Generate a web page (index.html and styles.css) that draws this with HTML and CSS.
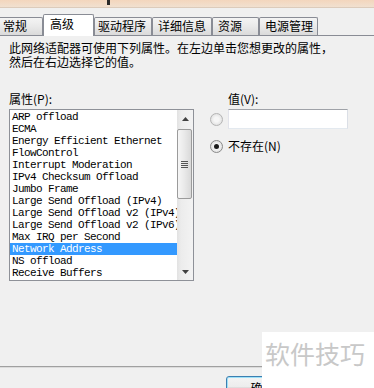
FILE: index.html
```html
<!DOCTYPE html>
<html lang="zh-CN">
<head>
<meta charset="utf-8">
<title>高级</title>
<link rel="stylesheet" href="styles.css">
</head>
<body>
<div class="titlebar"><span class="mark"></span></div>
<div class="tabs">
  <div class="tab t1">常规</div>
  <div class="tab t2 active">高级</div>
  <div class="tab t3">驱动程序</div>
  <div class="tab t4">详细信息</div>
  <div class="tab t5">资源</div>
  <div class="tab t6">电源管理</div>
</div>
<div class="panel">
  <div class="desc">
    <div class="line">此网络适配器可使用下列属性。在左边单击您想更改的属性，</div>
    <div class="line">然后在右边选择它的值。</div>
  </div>
  <div class="grid">
    <div class="label">属性(P):</div>
    <div class="label value-label">值(V):</div>
    <div class="listbox">
      <ul class="items">
        <li>ARP offload</li>
        <li>ECMA</li>
        <li>Energy Efficient Ethernet</li>
        <li>FlowControl</li>
        <li>Interrupt Moderation</li>
        <li>IPv4 Checksum Offload</li>
        <li>Jumbo Frame</li>
        <li>Large Send Offload (IPv4)</li>
        <li>Large Send Offload v2 (IPv4)</li>
        <li>Large Send Offload v2 (IPv6)</li>
        <li>Max IRQ per Second</li>
        <li class="selected">Network Address</li>
        <li>NS offload</li>
        <li>Receive Buffers</li>
      </ul>
      <div class="scrollbar">
        <div class="sb-btn"><svg width="7" height="4" viewBox="0 0 7 4"><path d="M3.5 0 L7 4 L0 4 Z" fill="#404040"/></svg></div>
        <div class="sb-track">
          <div class="thumb">
            <svg width="7" height="7" viewBox="0 0 7 7"><path d="M0 0.5H7M0 2.5H7M0 4.5H7M0 6.5H7" stroke="#555" stroke-width="1"/></svg>
          </div>
        </div>
        <div class="sb-btn"><svg width="7" height="4" viewBox="0 0 7 4"><path d="M0 0 L7 0 L3.5 4 Z" fill="#404040"/></svg></div>
      </div>
    </div>
    <div class="values">
      <div class="vrow"><span class="radio"></span><span class="input"></span></div>
      <div class="vrow row2"><span class="radio checked"></span><span>不存在(N)</span></div>
    </div>
  </div>
  <div class="separator"></div>
  <div class="buttons"><button class="btn">确定</button></div>
</div>
<div class="watermark">软件技巧</div>
</body>
</html>
```
FILE: styles.css
```css
body {
  margin: 0;
  width: 374px;
  height: 388px;
  overflow: hidden;
  position: relative;
  background: #f0f0f0;
  font-family: "Noto Sans CJK SC", "Noto Sans", sans-serif;
  font-size: 12px;
  color: #000;
}

.titlebar {
  height: 7px;
  background: linear-gradient(#f3d6bd, #f1e0d0);
  border-bottom: 1px solid #dccbbb;
  position: relative;
}

.mark {
  position: absolute;
  left: 107px;
  top: 0;
  width: 3px;
  height: 5px;
  background: #2a2a2a;
}

.tabs {
  display: flex;
  align-items: flex-end;
  height: 27px;
  margin-left: -2px;
  border-bottom: 1px solid #898c95;
}

.tab {
  box-sizing: border-box;
  height: 18px;
  border: 1px solid #898c95;
  border-bottom: none;
  border-radius: 2px 2px 0 0;
  background: linear-gradient(#f4f4f4, #e9e9e9 50%, #dadada);
  padding-left: 5px;
  line-height: 16px;
  white-space: nowrap;
}

.t1 { width: 45px; padding-left: 4px; }
.t2 { width: 51px; }
.t3 { width: 58px; padding-left: 3px; }
.t4 { width: 60px; }
.t5 { width: 47px; }
.t6 { width: 59px; }

.tab.active {
  height: 22px;
  margin-bottom: -1px;
  background: #fff;
  line-height: 18px;
  padding-left: 6px;
}

.panel {
  padding: 5px 0 0 9px;
}

.desc {
  display: flex;
  flex-direction: column;
}

.line {
  height: 14px;
  line-height: 14px;
  white-space: nowrap;
}

.grid {
  display: grid;
  grid-template-columns: 185px 1fr;
  column-gap: 16px;
  margin-top: 23px;
  align-items: start;
}

.label {
  line-height: 14px;
  margin-bottom: 3px;
}

.value-label {
  padding-left: 18px;
}

.listbox {
  box-sizing: border-box;
  height: 172px;
  border: 1px solid #8e9198;
  background: #fff;
  display: flex;
}

.items {
  list-style: none;
  margin: 0;
  padding: 1px 0;
  width: 167px;
  overflow: hidden;
}

.items li {
  height: 12px;
  line-height: 12px;
  padding-left: 2px;
  font-family: "Liberation Mono", "DejaVu Sans Mono", monospace;
  font-size: 11px;
  letter-spacing: -0.6px;
  white-space: nowrap;
  overflow: hidden;
}

.items li.selected {
  background: #3399ff;
  color: #fff;
}

.scrollbar {
  width: 16px;
  display: flex;
  flex-direction: column;
  background: linear-gradient(to right, #e2e2e2, #ececec 25%, #f3f3f3);
}

.sb-btn {
  height: 17px;
  display: flex;
  align-items: center;
  justify-content: center;
}

.sb-track {
  flex: 1;
  padding-top: 2px;
}

.thumb {
  box-sizing: border-box;
  width: 15px;
  height: 70px;
  border: 1px solid #9b9b9b;
  border-radius: 2px;
  background: linear-gradient(to right, #f6f6f6, #e9e9e9 50%, #d9d9d9);
  display: flex;
  align-items: center;
  justify-content: center;
}

.values {
  display: flex;
  flex-direction: column;
}

.vrow {
  display: flex;
  align-items: center;
  gap: 5px;
  height: 20px;
}

.row2 {
  height: 14px;
  margin-top: 10px;
  line-height: 14px;
}

.radio {
  box-sizing: border-box;
  width: 13px;
  height: 13px;
  border-radius: 50%;
  border: 1px solid #b4b4b4;
  background: radial-gradient(circle, #f6f6f6 30%, #e4e4e4 70%, #d8d8d8);
  display: flex;
  align-items: center;
  justify-content: center;
}

.radio.checked {
  border-color: #8a8a8a;
}

.radio.checked::after {
  content: "";
  width: 5px;
  height: 5px;
  border-radius: 50%;
  background: #1b1b1b;
}

.input {
  box-sizing: border-box;
  width: 120px;
  height: 20px;
  background: #fff;
  border: 1px solid;
  border-color: #9fa2a8 #dbdfe6 #e3e9ef #e2e3ea;
}

.separator {
  margin: 85px 0 0 -9px;
  height: 1px;
  background: #a0a0a0;
  border-bottom: 1px solid #dcdcdc;
}

.buttons {
  margin-top: 8px;
  padding-left: 217px;
}

.btn {
  box-sizing: border-box;
  width: 73px;
  height: 23px;
  border: 1px solid #3c7fb1;
  border-radius: 3px;
  box-shadow: inset 0 0 0 1px #9ee1f8;
  background: linear-gradient(#f4f4f4, #ececec 50%, #dedede 50%, #d2d2d2);
  font-family: "Noto Sans CJK SC", sans-serif;
  font-size: 12px;
  padding: 0;
  color: #000;
}

.watermark {
  position: absolute;
  left: 262px;
  top: 332px;
  width: 112px;
  height: 56px;
  background: #fff;
  color: #c8c8c8;
  font-size: 25px;
  line-height: 42px;
  padding-left: 3px;
  box-sizing: border-box;
  white-space: nowrap;
}
```
